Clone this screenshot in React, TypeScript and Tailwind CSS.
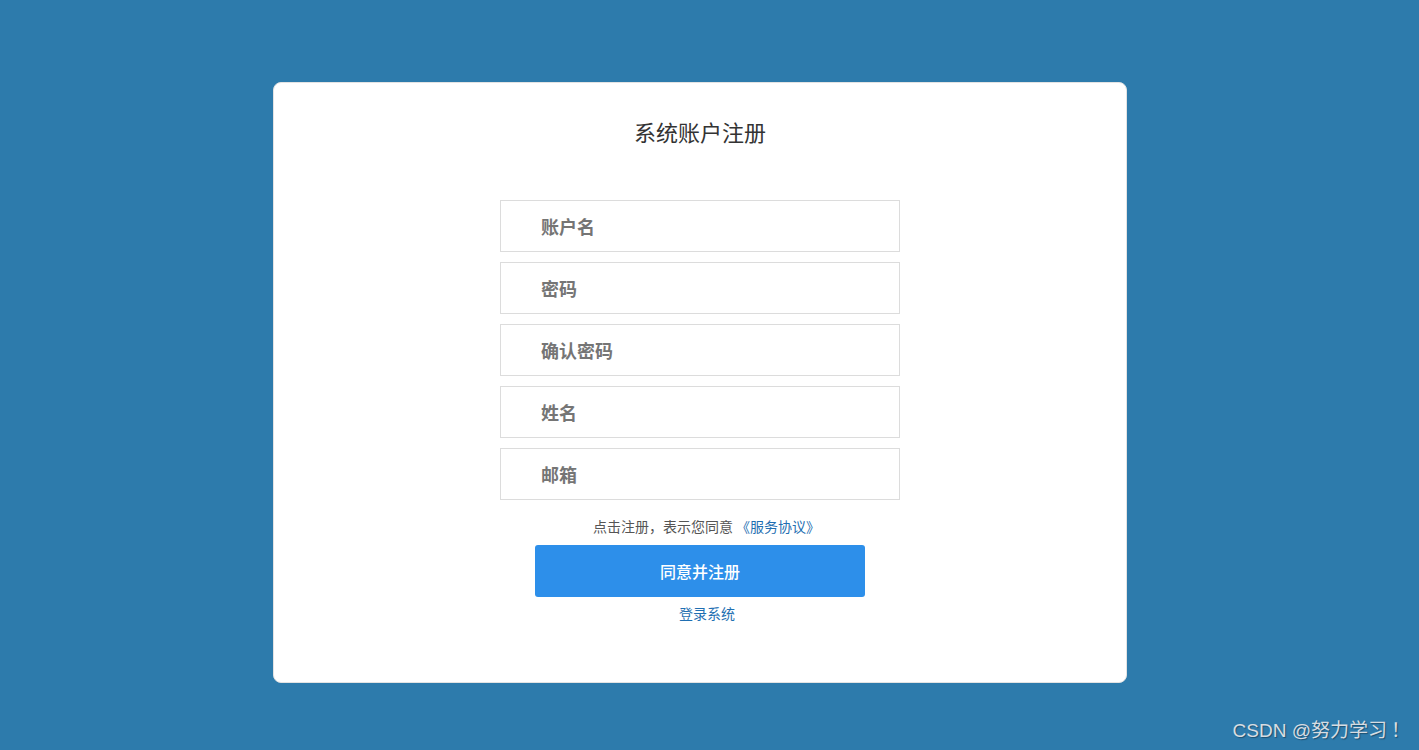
const fields = ['账户名', '密码', '确认密码', '姓名', '邮箱'];

const font = "font-['Noto_Sans_CJK_SC','Noto_Sans',sans-serif]";

export default function App() {
  return (
    <div className={`relative w-full h-[750px] bg-[#2d7bac] overflow-hidden ${font}`}>
      <div className="ml-[273px] pt-[82px]">
        <div className="w-[854px] h-[601px] bg-white rounded-[8px] border border-[#e3e3e3] flex flex-col items-center">
          <h1 className="mt-[33px] text-[22px] leading-[30px] text-[#333]">系统账户注册</h1>

          <div className="mt-[54px] flex flex-col gap-[10px]">
            {fields.map((f) => (
              <div
                key={f}
                className="w-[400px] h-[52px] border border-[#dcdcdc] flex items-center pl-[40px]"
              >
                <span className="text-[18px] font-bold text-[#757575]">{f}</span>
              </div>
            ))}
          </div>

          <p className="mt-[16px] ml-[13px] text-[14px] leading-[20px] text-[#555]">
            点击注册，表示您同意 <span className="text-[#1f6fb2]">《服务协议》</span>
          </p>

          <button className="mt-[9px] w-[330px] h-[52px] bg-[#2d8fea] rounded-[3px] text-white text-[16px] font-medium">
            同意并注册
          </button>

          <a className="mt-[6px] ml-[14px] text-[14px] leading-[20px] text-[#1f6fb2]">登录系统</a>
        </div>
      </div>

      <div className="absolute right-[9px] bottom-[5px] text-[19px] text-[#d7dde2] font-['Liberation_Sans','Noto_Sans_CJK_SC',sans-serif] [text-shadow:1px_1px_1px_rgba(0,0,0,0.35)]">
        CSDN @努力学习<span className="ml-[4px]">！</span>
      </div>
    </div>
  );
}
